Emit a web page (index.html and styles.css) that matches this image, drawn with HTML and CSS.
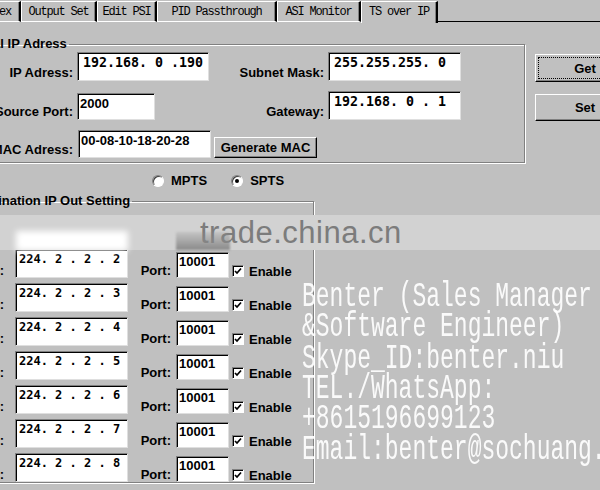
FILE: index.html
```html
<!DOCTYPE html>
<html lang="en">

<head>
    <meta charset="UTF-8">
    <title>TS over IP</title>
    <link rel="stylesheet" href="styles.css">
</head>

<body>
    <div class="dialog">
        <div class="tabs">
            <div class="tab tab-index">Index</div>
            <div class="tab tab-output">Output Set</div>
            <div class="tab tab-psi">Edit PSI</div>
            <div class="tab tab-pid">PID Passthrough</div>
            <div class="tab tab-asi">ASI Monitor</div>
            <div class="tab tab-ts active">TS over IP</div>
            <div class="tab-rest"></div>
        </div>

        <div class="panel">
            <div class="top">
                <fieldset class="group local">
                    <legend>Local IP Adress</legend>
                    <div class="ip-grid">
                        <span class="lbl">IP Adress:</span>
                        <div class="field ipaddr w-ip">192.168. 0 .190</div>
                        <span class="lbl">Subnet Mask:</span>
                        <div class="field ipaddr w-mask">255.255.255. 0</div>

                        <span class="lbl">Source Port:</span>
                        <div class="field w-src">2000</div>
                        <span class="lbl">Gateway:</span>
                        <div class="field ipaddr w-mask">192.168. 0 . 1</div>

                        <span class="lbl">MAC Adress:</span>
                        <div class="field w-mac">00-08-10-18-20-28</div>
                        <button class="btn gen">Generate MAC</button>
                    </div>
                </fieldset>
                <div class="side">
                    <button class="btn side-btn default">Get</button>
                    <button class="btn side-btn set">Set</button>
                </div>
            </div>

            <div class="modes">
                <label class="radio"><span class="dot"></span>MPTS</label>
                <label class="radio"><span class="dot on"></span>SPTS</label>
            </div>

            <fieldset class="group dest">
                <legend>Destination IP Out Setting</legend>
                <div class="out-grid">
                    <span class="lbl">IP1:</span>
                    <div class="field ipaddr row-ip">224. 2 . 2 . 2</div>
                    <span class="lbl">Port:</span>
                    <div class="field port">10001</div>
                    <span class="chk"><svg viewBox="0 0 8 8"><polyline points="1,4 3,6 7,1.5" /></svg></span>
                    <span class="en">Enable</span>

                    <span class="lbl">IP2:</span>
                    <div class="field ipaddr row-ip">224. 2 . 2 . 3</div>
                    <span class="lbl">Port:</span>
                    <div class="field port">10001</div>
                    <span class="chk"><svg viewBox="0 0 8 8"><polyline points="1,4 3,6 7,1.5" /></svg></span>
                    <span class="en">Enable</span>

                    <span class="lbl">IP3:</span>
                    <div class="field ipaddr row-ip">224. 2 . 2 . 4</div>
                    <span class="lbl">Port:</span>
                    <div class="field port">10001</div>
                    <span class="chk"><svg viewBox="0 0 8 8"><polyline points="1,4 3,6 7,1.5" /></svg></span>
                    <span class="en">Enable</span>

                    <span class="lbl">IP4:</span>
                    <div class="field ipaddr row-ip">224. 2 . 2 . 5</div>
                    <span class="lbl">Port:</span>
                    <div class="field port">10001</div>
                    <span class="chk"><svg viewBox="0 0 8 8"><polyline points="1,4 3,6 7,1.5" /></svg></span>
                    <span class="en">Enable</span>

                    <span class="lbl">IP5:</span>
                    <div class="field ipaddr row-ip">224. 2 . 2 . 6</div>
                    <span class="lbl">Port:</span>
                    <div class="field port">10001</div>
                    <span class="chk"><svg viewBox="0 0 8 8"><polyline points="1,4 3,6 7,1.5" /></svg></span>
                    <span class="en">Enable</span>

                    <span class="lbl">IP6:</span>
                    <div class="field ipaddr row-ip">224. 2 . 2 . 7</div>
                    <span class="lbl">Port:</span>
                    <div class="field port">10001</div>
                    <span class="chk"><svg viewBox="0 0 8 8"><polyline points="1,4 3,6 7,1.5" /></svg></span>
                    <span class="en">Enable</span>

                    <span class="lbl">IP7:</span>
                    <div class="field ipaddr row-ip">224. 2 . 2 . 8</div>
                    <span class="lbl">Port:</span>
                    <div class="field port">10001</div>
                    <span class="chk"><svg viewBox="0 0 8 8"><polyline points="1,4 3,6 7,1.5" /></svg></span>
                    <span class="en">Enable</span>
                </div>
            </fieldset>
        </div>
    </div>

    <!-- watermark left on the screenshot -->
    <div class="wm-band">trade.china.cn</div>
    <div class="wm-glow"></div>
    <div class="wm-smudge"></div>

    <div class="contact">Benter (Sales Manager
&amp;Software Engineer)
Skype_ID:benter.niu
TEL./WhatsApp:
+8615196699123
Email:benter@sochuang.com</div>
</body>

</html>
```

FILE: styles.css
```css
body {
    position: relative;
    margin: 0;
    width: 600px;
    height: 490px;
    overflow: hidden;
    background-color: #c0c0c0;
    color: #000;
    font: bold 13px "Liberation Sans", Arial, sans-serif;
}

button {
    padding: 0;
    font: inherit;
    color: #000;
    outline: none;
}

.dialog {
    margin-left: -40px;
    width: 720px;
}

/* tab strip */
.tabs {
    display: flex;
    box-sizing: border-box;
    height: 23px;
    padding-top: 1px;
    font: 12px "Liberation Mono", "Courier New", monospace;
    letter-spacing: -1.2px;
}

.tab {
    box-sizing: border-box;
    height: 21px;
    line-height: 20px;
    text-align: center;
    white-space: nowrap;
    border-top: 1px solid #fff;
    border-left: 1px solid #fff;
    border-right: 2px solid #000;
    border-bottom: 1px solid #fff;
    box-shadow: inset -1px 0 0 #808080;
}

.tab.active {
    height: 22px;
    border-bottom: none;
}

.tab-index {
    width: 61px;
    padding-right: 8px;
    text-align: right;
}

.tab-output { width: 76px; }
.tab-psi { width: 60px; }
.tab-pid { width: 120px; }
.tab-asi { width: 84px; }
.tab-ts { width: 77px; }

.tab-rest {
    flex: 1;
    height: 21px;
    box-sizing: border-box;
    border-bottom: 1px solid #000;
}

/* group boxes */
.group {
    box-sizing: border-box;
    min-width: 0;
    margin: 0;
    border: 1px solid #808080;
    box-shadow: 1px 1px 0 #fff, inset 1px 1px 0 #fff;
}

.group legend {
    padding: 0 2px;
    line-height: 16px;
    white-space: nowrap;
}

.top {
    display: flex;
    align-items: flex-start;
    margin-top: 13px;
}

.local {
    width: 563px;
    margin-left: 2px;
    padding: 0 8px 4px 5px;
}

.ip-grid {
    display: grid;
    grid-template-columns: 109px 134px 117px 133px;
    grid-template-rows: 29px 29px 28px;
    row-gap: 10px;
    align-items: end;
}

.lbl {
    padding-right: 4px;
    line-height: 16px;
    text-align: right;
    white-space: nowrap;
}

.field {
    box-sizing: border-box;
    height: 29px;
    padding: 2px 2px 0;
    line-height: 16px;
    white-space: pre;
    overflow: hidden;
    background-color: #fff;
    border: 1px solid;
    border-color: #808080 #dfdfdf #dfdfdf #808080;
    box-shadow: inset 1px 1px 0 #000;
}

.ipaddr {
    padding-left: 5px;
    font: bold 13.3px "DejaVu Sans Mono", monospace;
}

.w-ip { width: 132px; }
.w-mask { width: 133px; }
.w-mac { width: 133px; height: 28px; margin-left: 1px; }

.w-src {
    width: 78px;
    height: 27px;
}

.btn {
    box-sizing: border-box;
    background-color: #c0c0c0;
    border: 1px solid;
    border-color: #fff #000 #000 #fff;
    box-shadow: inset -1px -1px 0 #808080;
}

.gen {
    justify-self: start;
    width: 103px;
    height: 21px;
    margin-left: 3px;
}

.side {
    display: flex;
    flex-direction: column;
    gap: 12px;
    margin-left: 10px;
    padding-top: 18px;
}

.side-btn {
    width: 100px;
    height: 28px;
}

.side-btn.default {
    outline: 1px dotted #000;
    outline-offset: -4px;
}

.side-btn.set {
    height: 27px;
}

/* MPTS / SPTS */
.modes {
    display: flex;
    align-items: center;
    height: 16px;
    margin: 10px 0 0 192px;
    line-height: 16px;
}

.radio {
    display: flex;
    align-items: center;
    gap: 7px;
}

.radio + .radio {
    margin-left: 24px;
}

.dot {
    position: relative;
    box-sizing: border-box;
    width: 12px;
    height: 12px;
    border-radius: 50%;
    background-color: #fff;
    border: 1px solid;
    border-color: #808080 #fff #fff #808080;
    box-shadow: inset 1px 1px 0 #404040;
}

.dot.on::after {
    content: "";
    position: absolute;
    left: 3px;
    top: 3px;
    width: 4px;
    height: 4px;
    border-radius: 50%;
    background-color: #000;
}

/* destination rows */
.dest {
    width: 352px;
    margin: 4px 0 0 2px;
    padding: 40px 8px 0 5px;
}

.out-grid {
    display: grid;
    grid-template-columns: 47px 113px 48px 53px 15px auto;
    grid-auto-rows: 29px;
    row-gap: 5px;
    align-items: end;
}

.out-grid .lbl {
    padding-right: 5px;
    margin-bottom: -1px;
}

.out-grid .lbl:nth-child(6n+1) {
    padding-right: 11px;
}

.row-ip {
    padding-left: 3px;
    font-size: 12px;
}

.port {
    height: 26px;
    padding-top: 1px;
}

.chk {
    display: flex;
    align-items: center;
    justify-content: center;
    box-sizing: border-box;
    width: 12px;
    height: 12px;
    margin: 0 0 1px 3px;
    background-color: #fff;
    border: 1px solid;
    border-color: #808080 #fff #fff #808080;
    box-shadow: inset 1px 1px 0 #000;
}

.chk svg {
    width: 8px;
    height: 8px;
    fill: none;
    stroke: #000;
    stroke-width: 1.7;
}

.en {
    margin: 0 0 -2px 5px;
    line-height: 16px;
}

/* watermarks */
.wm-band {
    position: absolute;
    left: 0;
    top: 215px;
    box-sizing: border-box;
    width: 600px;
    height: 35px;
    padding-left: 200px;
    background-color: #d2d2d2;
    color: #7c7c7c;
    font: 31px "Liberation Sans", Arial, sans-serif;
    line-height: 35px;
    letter-spacing: 0.5px;
}

.wm-glow {
    position: absolute;
    left: 16px;
    top: 231px;
    width: 112px;
    height: 20px;
    background-color: #fff;
    filter: blur(3px);
}

.wm-smudge {
    position: absolute;
    left: 176px;
    top: 232px;
    width: 54px;
    height: 18px;
    background-image: linear-gradient(to bottom, rgba(140, 140, 140, 0.2), #8a8a8a);
    filter: blur(1px);
}

.contact {
    position: absolute;
    left: 302px;
    top: 282px;
    white-space: pre;
    color: rgba(255, 255, 255, 0.92);
    font: 23px "Liberation Mono", "Courier New", monospace;
    line-height: 20.33px;
    transform: scaleY(1.5);
    transform-origin: 0 0;
}
```
